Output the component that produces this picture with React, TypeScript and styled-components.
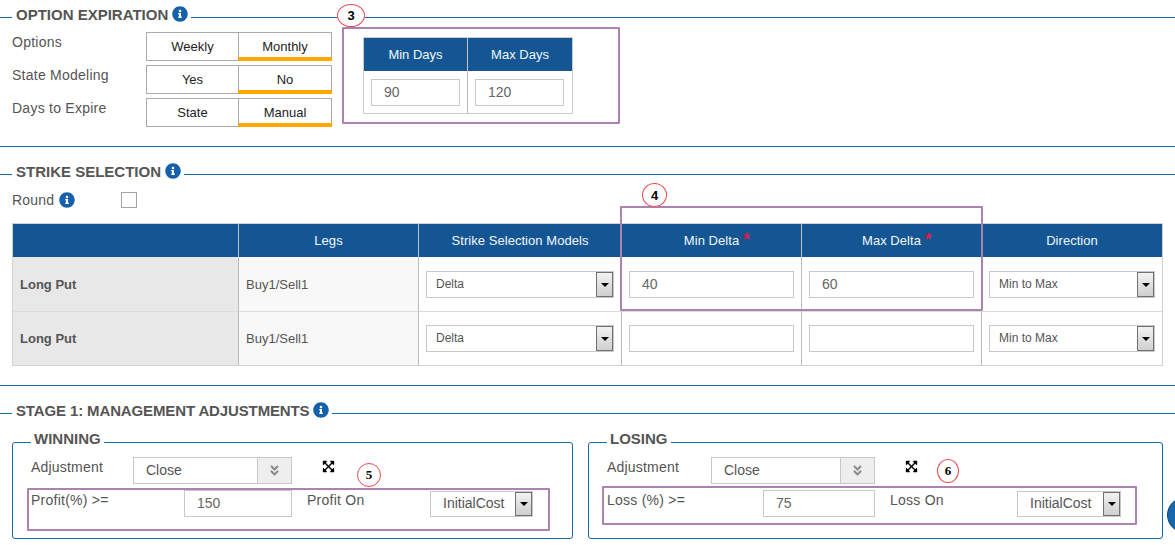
import React from "react";
import styled, { createGlobalStyle } from "styled-components";
import { FaInfoCircle, FaExpandArrowsAlt, FaAngleDoubleDown } from "react-icons/fa";

const Global = createGlobalStyle`
  html, body { margin: 0; padding: 0; background: #fff; overflow: hidden; }
  body { font-family: "Liberation Sans", Arial, sans-serif; color: #555; }
  * { box-sizing: border-box; }
`;

const Page = styled.div`
  position: relative;
  width: 1175px;
  height: 545px;
  overflow: hidden;
  padding-top: 7px;
`;

const LegendRow = styled.div`
  display: flex;
  align-items: flex-start;
  height: 16px;
`;
const RuleStart = styled.div`
  width: 12px;
  height: 1px;
  margin-top: 10px;
  background: #1b67a5;
`;
const RuleEnd = styled.div`
  flex: 1;
  height: 1px;
  margin-top: 10px;
  margin-left: 3px;
  background: #1b67a5;
`;
const LegendText = styled.div<{ $spacing: number }>`
  margin-left: 4px;
  font-size: 15px;
  font-weight: 700;
  line-height: 16px;
  letter-spacing: ${(p) => p.$spacing}px;
  color: #555;
  white-space: nowrap;
`;
const Info = styled(FaInfoCircle)`
  display: block;
  width: 16px;
  height: 16px;
  color: #1460aa;
  flex: none;
`;
const LegendInfo = styled(Info)`
  margin-left: 4px;
  margin-top: -1px;
`;

const Divider = styled.hr<{ $top: number }>`
  margin: ${(p) => p.$top}px 0 17px;
  border: 0;
  height: 1px;
  background: #1b67a5;
`;

const ExpirationBody = styled.div`
  display: flex;
  align-items: flex-start;
  padding: 9px 0 0 12px;
`;
const OptionList = styled.div`
  display: flex;
  flex-direction: column;
  gap: 4px;
`;
const OptionRow = styled.div`
  display: flex;
  align-items: flex-start;
`;
const OptionLabel = styled.div`
  width: 134px;
  font-size: 14px;
  line-height: 20px;
  letter-spacing: 0.25px;
  color: #555;
`;
const Toggle = styled.div`
  position: relative;
  display: grid;
  grid-template-columns: 91px 1fr;
  width: 186px;
  height: 29px;
  border: 1px solid #aaa;
`;
const ToggleOption = styled.div<{ $active?: boolean }>`
  position: relative;
  display: flex;
  align-items: center;
  justify-content: center;
  font-size: 13px;
  color: #222;
  padding-bottom: 1px;
  ${(p) => (p.$active ? "border-left: 1px solid #aaa;" : "")}
  ${(p) =>
    p.$active
      ? `&::after { content: ""; position: absolute; left: -1px; right: -1px; bottom: -1px; height: 4px; background: #ffa800; }`
      : ""}
`;

const DaysTable = styled.div`
  display: grid;
  grid-template-columns: 104px 104px;
  width: 210px;
  margin: 5px 0 0 31px;
  border: 1px solid #ccc;
`;
const DaysHead = styled.div<{ $last?: boolean }>`
  height: 33px;
  display: flex;
  align-items: center;
  justify-content: center;
  background: #145694;
  color: #f2f6fa;
  font-size: 13px;
  ${(p) => (p.$last ? "" : "border-right: 1px solid #c4c4c4;")}
`;
const DaysCell = styled.div<{ $last?: boolean }>`
  height: 42px;
  padding: 8px 0 0 7px;
  ${(p) => (p.$last ? "" : "border-right: 1px solid #bbb;")}
`;
const TextField = styled.div<{ $w: number }>`
  width: ${(p) => p.$w}px;
  height: 27px;
  flex: none;
  border: 1px solid #c8c8c8;
  background: #fff;
  padding-left: 12px;
  font-size: 14px;
  line-height: 25px;
  color: #666;
`;

const RoundRow = styled.div`
  display: flex;
  align-items: center;
  height: 16px;
  margin: 12px 0 15px 12px;
`;
const RoundLabel = styled.div`
  display: flex;
  align-items: center;
  gap: 5px;
  width: 109px;
  font-size: 14px;
  letter-spacing: 0.2px;
  color: #555;
`;
const CheckBox = styled.div`
  width: 16px;
  height: 16px;
  border: 1px solid #a5a5a5;
  background: #fff;
`;

const Grid = styled.div`
  display: grid;
  grid-template-columns: 226px 180px 203px 180px 180px 180px;
  width: 1151px;
  margin-left: 12px;
  border: 1px solid #d2d2d2;
`;
const HeadCell = styled.div<{ $last?: boolean }>`
  height: 33px;
  display: flex;
  align-items: center;
  justify-content: center;
  background: #145694;
  color: #f2f6fa;
  font-size: 13px;
  letter-spacing: 0.05px;
  ${(p) => (p.$last ? "" : "border-right: 1px solid #c0c0c0;")}
`;
const RequiredLabel = styled.span`
  position: relative;
`;
const Star = styled.span`
  position: absolute;
  left: 100%;
  top: -1px;
  margin-left: 4px;
  color: #f0143c;
  font-weight: 700;
  font-size: 16px;
  line-height: 16px;
`;
const BodyCell = styled.div<{ $bg?: string; $end?: boolean; $top: number; $bottom?: boolean }>`
  height: ${(p) => (p.$bottom ? 55 : 53)}px;
  padding: ${(p) => p.$top}px 0 0 7px;
  background: ${(p) => p.$bg || "#fff"};
  ${(p) => (p.$end ? "" : "border-right: 1px solid #bbb;")}
  ${(p) => (p.$bottom ? "border-bottom: 1px solid #dcdcdc;" : "")}
`;
const NameText = styled.div`
  font-size: 13px;
  font-weight: 700;
  line-height: 27px;
  color: #555;
`;
const LegText = styled.div`
  font-size: 13px;
  line-height: 27px;
  color: #555;
`;

const Select = styled.div<{ $w: number; $size: number; $pad: number; $h?: number; $mt?: number }>`
  position: relative;
  width: ${(p) => p.$w}px;
  height: ${(p) => p.$h || 27}px;
  margin-top: ${(p) => p.$mt || 0}px;
  flex: none;
  border: 1px solid #c8c8c8;
  background: #fff;
  padding-left: ${(p) => p.$pad}px;
  font-size: ${(p) => p.$size}px;
  line-height: ${(p) => (p.$h || 27) - 3}px;
  color: #555;
`;
const SelectButton = styled.div`
  position: absolute;
  top: 0;
  right: 0;
  bottom: 0;
  width: 17px;
  display: flex;
  align-items: center;
  justify-content: center;
  border: 1px solid #707070;
  background: linear-gradient(#f2f2f2, #cfcfcf);
  &::after {
    content: "";
    border-left: 4px solid transparent;
    border-right: 4px solid transparent;
    border-top: 4px solid #000;
  }
`;

const GroupRow = styled.div`
  display: flex;
  gap: 15px;
  margin: 12px 0 0 12px;
`;
const Group = styled.fieldset<{ $w: number }>`
  width: ${(p) => p.$w}px;
  height: 108px;
  margin: 0;
  padding: 0 0 0 18px;
  border: 1px solid #1b67a5;
  border-radius: 3px;
  min-width: 0;
`;
const GroupLegend = styled.legend`
  height: 23px;
  padding: 0 3px;
  margin-left: 0;
  font-size: 15px;
  font-weight: 700;
  line-height: 16px;
  color: #555;
`;
const AdjustRow = styled.div`
  display: flex;
  align-items: flex-start;
  margin-top: 3px;
`;
const AdjustLabel = styled.div<{ $w: number }>`
  width: ${(p) => p.$w}px;
  font-size: 14px;
  line-height: 20px;
  letter-spacing: 0.2px;
  color: #555;
  flex: none;
`;
const Combo = styled.div<{ $w: number }>`
  position: relative;
  width: ${(p) => p.$w}px;
  height: 27px;
  flex: none;
  border: 1px solid #c8c8c8;
  padding-left: 12px;
  font-size: 14px;
  line-height: 25px;
  color: #555;
`;
const ComboButton = styled.div`
  position: absolute;
  top: 0;
  right: 0;
  bottom: 0;
  width: 34px;
  display: flex;
  align-items: center;
  justify-content: center;
  background: #eee;
  border-left: 1px solid #c8c8c8;
  color: #8a8a8a;
  font-size: 13px;
`;
const Expand = styled(FaExpandArrowsAlt)`
  display: block;
  width: 13px;
  height: 13px;
  margin: 3px 0 0 30px;
  color: #000;
`;
const CriteriaRow = styled.div`
  display: flex;
  align-items: flex-start;
  margin-top: 6px;
`;
const CriteriaLabel = styled.div<{ $w: number }>`
  width: ${(p) => p.$w}px;
  flex: none;
  font-size: 14px;
  line-height: 20px;
  letter-spacing: 0.25px;
  color: #555;
`;
const SecondLabel = styled(CriteriaLabel)`
  margin-left: 15px;
`;

const Callout = styled.div<{ $x: number; $y: number; $w: number; $h: number; $serif?: boolean }>`
  position: absolute;
  left: ${(p) => p.$x}px;
  top: ${(p) => p.$y}px;
  width: ${(p) => p.$w}px;
  height: ${(p) => p.$h}px;
  border: 1px solid #f0484e;
  border-radius: 50%;
  background: #fff;
  display: flex;
  align-items: center;
  justify-content: center;
  font-family: ${(p) => (p.$serif ? '"Liberation Serif", serif' : '"Liberation Sans", sans-serif')};
  font-weight: 700;
  font-size: 13px;
  color: #000;
`;
const Highlight = styled.div<{ $x: number; $y: number; $w: number; $h: number }>`
  position: absolute;
  left: ${(p) => p.$x}px;
  top: ${(p) => p.$y}px;
  width: ${(p) => p.$w}px;
  height: ${(p) => p.$h}px;
  border: 2px solid #ac82ae;
  border-radius: 1px;
  pointer-events: none;
`;
const HelpBubble = styled.div`
  position: absolute;
  left: 1167px;
  top: 497px;
  width: 36px;
  height: 36px;
  border-radius: 50%;
  background: #1668ad;
  border: 1px solid #10416e;
`;

const Legend = ({ title, spacing = 0 }: { title: string; spacing?: number }) => (
  <LegendRow>
    <RuleStart />
    <LegendText $spacing={spacing}>{title}</LegendText>
    <LegendInfo />
    <RuleEnd />
  </LegendRow>
);

const options = [
  ["Options", "Weekly", "Monthly"],
  ["State Modeling", "Yes", "No"],
  ["Days to Expire", "State", "Manual"],
];

const Arrow = () => <SelectButton />;

const StrikeRow = ({ top, bottom, min, max }: { top: number; bottom?: boolean; min: string; max: string }) => (
  <>
    <BodyCell $bg="#e8e8e8" $top={top} $bottom={bottom}>
      <NameText>Long Put</NameText>
    </BodyCell>
    <BodyCell $bg="#f8f8f8" $top={top} $bottom={bottom}>
      <LegText>Buy1/Sell1</LegText>
    </BodyCell>
    <BodyCell $top={top} $bottom={bottom}>
      <Select $w={188} $size={12} $pad={9}>
        Delta
        <Arrow />
      </Select>
    </BodyCell>
    <BodyCell $top={top} $bottom={bottom}>
      <TextField $w={165}>{min}</TextField>
    </BodyCell>
    <BodyCell $top={top} $bottom={bottom}>
      <TextField $w={165}>{max}</TextField>
    </BodyCell>
    <BodyCell $top={top} $bottom={bottom} $end>
      <Select $w={166} $size={12} $pad={9}>
        Min to Max
        <Arrow />
      </Select>
    </BodyCell>
  </>
);

export default function App() {
  return (
    <Page>
      <Global />
      <Legend title="OPTION EXPIRATION" />
      <ExpirationBody>
        <OptionList>
          {options.map(([label, a, b]) => (
            <OptionRow key={label}>
              <OptionLabel>{label}</OptionLabel>
              <Toggle>
                <ToggleOption>{a}</ToggleOption>
                <ToggleOption $active>{b}</ToggleOption>
              </Toggle>
            </OptionRow>
          ))}
        </OptionList>
        <DaysTable>
          <DaysHead>Min Days</DaysHead>
          <DaysHead $last>Max Days</DaysHead>
          <DaysCell>
            <TextField $w={89}>90</TextField>
          </DaysCell>
          <DaysCell $last>
            <TextField $w={89}>120</TextField>
          </DaysCell>
        </DaysTable>
      </ExpirationBody>
      <Divider $top={19} />

      <Legend title="STRIKE SELECTION" />
      <RoundRow>
        <RoundLabel>
          Round
          <Info />
        </RoundLabel>
        <CheckBox />
      </RoundRow>
      <Grid>
        <HeadCell />
        <HeadCell>Legs</HeadCell>
        <HeadCell>Strike Selection Models</HeadCell>
        <HeadCell>
          <RequiredLabel>
            Min Delta<Star>*</Star>
          </RequiredLabel>
        </HeadCell>
        <HeadCell>
          <RequiredLabel>
            Max Delta<Star>*</Star>
          </RequiredLabel>
        </HeadCell>
        <HeadCell $last>Direction</HeadCell>
        <StrikeRow top={14} bottom min="40" max="60" />
        <StrikeRow top={13} min="" max="" />
      </Grid>
      <Divider $top={19} />

      <Legend title="STAGE 1: MANAGEMENT ADJUSTMENTS" spacing={-0.13} />
      <GroupRow>
        <Group $w={561}>
          <GroupLegend>WINNING</GroupLegend>
          <AdjustRow>
            <AdjustLabel $w={102}>Adjustment</AdjustLabel>
            <Combo $w={159}>
              Close
              <ComboButton>
                <FaAngleDoubleDown />
              </ComboButton>
            </Combo>
            <Expand />
          </AdjustRow>
          <CriteriaRow>
            <CriteriaLabel $w={153}>Profit(%) &gt;=</CriteriaLabel>
            <TextField $w={108}>150</TextField>
            <SecondLabel $w={123}>Profit On</SecondLabel>
            <Select $w={103} $size={14} $pad={12} $h={26} $mt={1}>
              InitialCost
              <Arrow />
            </Select>
          </CriteriaRow>
        </Group>
        <Group $w={575}>
          <GroupLegend>LOSING</GroupLegend>
          <AdjustRow>
            <AdjustLabel $w={104}>Adjustment</AdjustLabel>
            <Combo $w={164}>
              Close
              <ComboButton>
                <FaAngleDoubleDown />
              </ComboButton>
            </Combo>
            <Expand />
          </AdjustRow>
          <CriteriaRow>
            <CriteriaLabel $w={156}>Loss (%) &gt;=</CriteriaLabel>
            <TextField $w={112}>75</TextField>
            <SecondLabel $w={127}>Loss On</SecondLabel>
            <Select $w={104} $size={14} $pad={12} $h={26} $mt={1}>
              InitialCost
              <Arrow />
            </Select>
          </CriteriaRow>
        </Group>
      </GroupRow>

      <Highlight $x={342} $y={27} $w={278} $h={97} />
      <Highlight $x={620} $y={206} $w={363} $h={105} />
      <Highlight $x={27} $y={488} $w={523} $h={43} />
      <Highlight $x={602} $y={486} $w={535} $h={39} />
      <Callout $x={337} $y={4} $w={28} $h={23}>3</Callout>
      <Callout $x={642} $y={183} $w={25} $h={24}>4</Callout>
      <Callout $x={357} $y={463} $w={24} $h={24} $serif>5</Callout>
      <Callout $x={937} $y={459} $w={22} $h={24} $serif>6</Callout>
      <HelpBubble />
    </Page>
  );
}
